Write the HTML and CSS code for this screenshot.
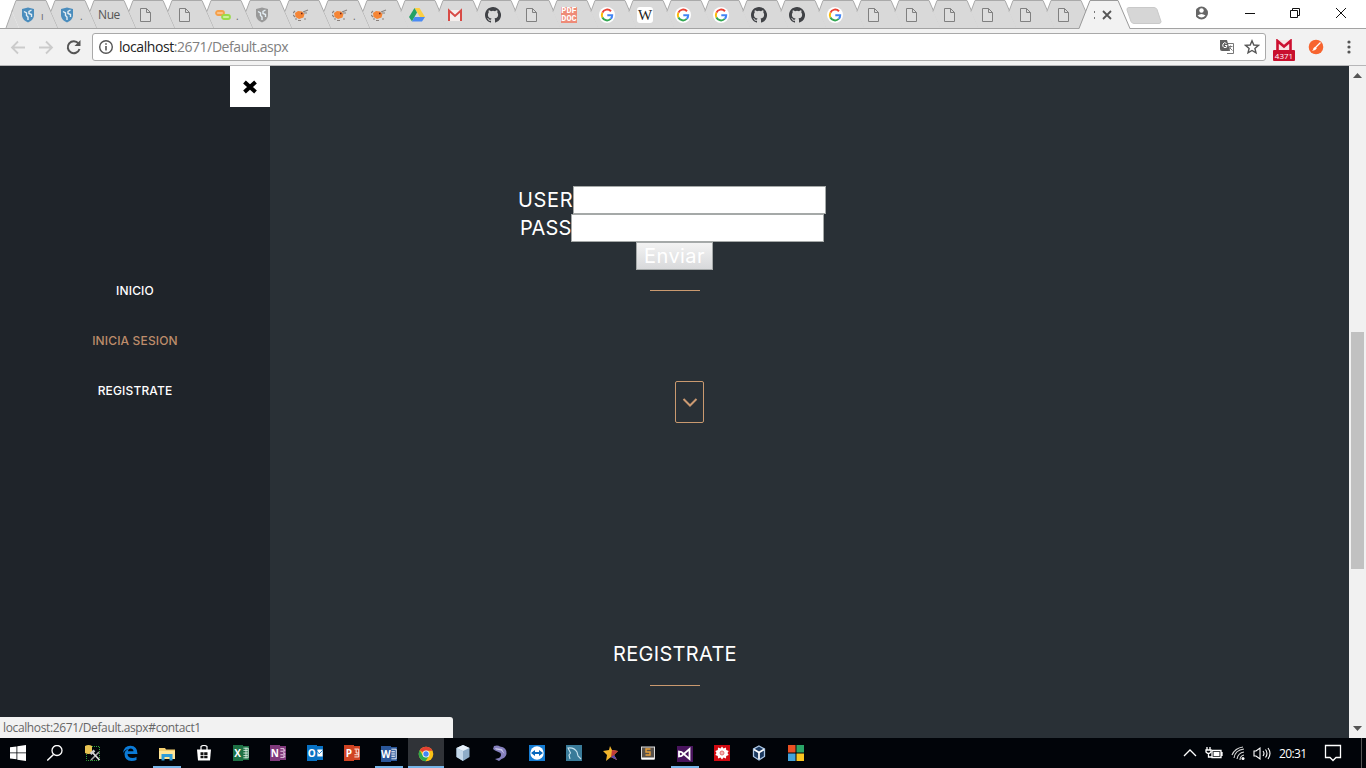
FILE: index.html
```html
<!DOCTYPE html>
<html lang="es">
<head>
<meta charset="utf-8">
<title>Default</title>
<link rel="stylesheet" href="styles.css">
</head>
<body>
<svg class="defs" width="0" height="0">
  <symbol id="tab" viewBox="0 0 54 28"><path d="M5.9 11.5 10 .5H40L52 28H13z" fill="#d9d9d9"/><path d="M5.9 11.5 10 .5H40L52 28" fill="none" stroke="#aaa"/></symbol>
  <symbol id="page" viewBox="0 0 16 16"><path d="M3.500 1.500h6l4 4v9h-10zM9.500 1.500v4h4" fill="#dedede" stroke="#808080"/></symbol>
  <symbol id="shield" viewBox="0 0 16 16"><path d="M8 .5 14 2v7Q13 13.500 8 15.500 3 13.500 2 9V2z" fill="currentColor"/><path d="M4 4.500 6.500 6v2.500L8 10v3M11.500 3 9 4.500v2l2.500 1V10" fill="none" stroke="#e4eef4" stroke-width="1.400"/></symbol>
  <symbol id="links" viewBox="0 0 16 16"><rect x="1" y="4" width="8" height="4" rx="2" fill="#f9c38c" stroke="#f5a04a" stroke-width="1.800"/><rect x="7" y="8" width="8" height="4" rx="2" fill="#cdf09c" stroke="#9adb4b" stroke-width="1.800"/></symbol>
  <symbol id="crab" viewBox="0 0 16 16"><path d="M2 6l3-2 4 .5L11.500 7l-1 3.500L6 12l-3.500-2z" fill="#f58535"/><path d="M0 6l2-2M10 5l5-2M11 6h3M0 8l2 2M2 12h2M5 13.500h3M11 12h2" stroke="#89817d" stroke-width="1.200"/><path d="M8 6.500h1.500" stroke="#622" stroke-width="1.300"/></symbol>
  <symbol id="drive" viewBox="0 0 16 16"><path d="M5.500 1h5L16 10h-5z" fill="#fccf43"/><path d="M5.500 1 8 5.500 3 14.500 0 10z" fill="#24a265"/><path d="M5.500 10H16l-3 4.500H3z" fill="#4a8af4"/></symbol>
  <symbol id="gmail" viewBox="0 0 16 16"><path d="M1 3h14v11H1z" fill="#f5efed"/><path d="M2 14V3.500l6 5.500 6-5.500V14" fill="none" stroke="#d84b46" stroke-width="2"/></symbol>
  <symbol id="github" viewBox="0 0 16 16"><path fill="#404246" d="M8 0C3.580 0 0 3.580 0 8c0 3.540 2.290 6.530 5.470 7.590.4.070.550-.17.550-.38v-1.490c-2.230.48-2.690-.94-2.690-.94-.36-.92-.89-1.170-.89-1.170-.73-.5.060-.49.060-.49.800.060 1.230.82 1.230.82.710 1.230 1.870.87 2.330.67.070-.52.280-.87.500-1.070-1.780-.2-3.640-.89-3.640-3.950 0-.88.310-1.590.82-2.150-.08-.2-.36-1.020.080-2.120 0 0 .67-.21 2.200.82a7.600 7.600 0 0 1 4 0c1.530-1.040 2.200-.82 2.200-.82.440 1.100.16 1.920.080 2.120.51.560.82 1.270.82 2.150 0 3.070-1.870 3.750-3.650 3.950.29.250.54.730.54 1.480v2.200c0 .21.150.46.550.38A8 8 0 0 0 8 0"/></symbol>
  <symbol id="google" viewBox="0 0 16 16"><circle cx="8" cy="8" r="8" fill="#fff"/><g fill="none" stroke-width="2"><path d="M12 4.200A5.200 5.200 0 0 0 3.400 5.700" stroke="#ea4335"/><path d="M3.400 5.700a5.200 5.200 0 0 0 0 4.800" stroke="#fbbc05"/><path d="M3.400 10.500a5.200 5.200 0 0 0 8.300 1.400" stroke="#34a853"/><path d="M11.700 11.900A5.200 5.200 0 0 0 13.200 8.200H8.300" stroke="#4285f4"/></g></symbol>
</svg>

<header class="tabstrip">
  <div class="tab wide first"><svg class="shape"><use href="#tab"/><path d="M0 28 5.900 11.500 13 28" fill="#d9d9d9"/><path d="M0 28 6.500 10" stroke="#aaa"/></svg><svg class="ico blue"><use href="#shield"/></svg><i class="cut">ı</i></div>
  <div class="tab wide"><svg class="shape"><use href="#tab"/></svg><svg class="ico blue"><use href="#shield"/></svg><i class="cut">.</i></div>
  <div class="tab wide"><svg class="shape"><use href="#tab"/></svg><span class="tabtext">Nue</span></div>
  <div class="tab wide"><svg class="shape"><use href="#tab"/></svg><svg class="ico"><use href="#page"/></svg></div>
  <div class="tab wide"><svg class="shape"><use href="#tab"/></svg><svg class="ico"><use href="#page"/></svg></div>
  <div class="tab wide"><svg class="shape"><use href="#tab"/></svg><svg class="ico"><use href="#links"/></svg><i class="cut">.</i></div>
  <div class="tab wide"><svg class="shape"><use href="#tab"/></svg><svg class="ico grey"><use href="#shield"/></svg></div>
  <div class="tab wide"><svg class="shape"><use href="#tab"/></svg><svg class="ico"><use href="#crab"/></svg></div>
  <div class="tab wide"><svg class="shape"><use href="#tab"/></svg><svg class="ico"><use href="#crab"/></svg><i class="cut">.</i></div>
  <div class="tab"><svg class="shape"><use href="#tab"/></svg><svg class="ico"><use href="#crab"/></svg></div>
  <div class="tab"><svg class="shape"><use href="#tab"/></svg><svg class="ico"><use href="#drive"/></svg></div>
  <div class="tab"><svg class="shape"><use href="#tab"/></svg><svg class="ico"><use href="#gmail"/></svg></div>
  <div class="tab"><svg class="shape"><use href="#tab"/></svg><svg class="ico"><use href="#github"/></svg></div>
  <div class="tab"><svg class="shape"><use href="#tab"/></svg><svg class="ico"><use href="#page"/></svg></div>
  <div class="tab"><svg class="shape"><use href="#tab"/></svg><span class="pdf">PDF<br>DOC</span></div>
  <div class="tab"><svg class="shape"><use href="#tab"/></svg><svg class="ico"><use href="#google"/></svg></div>
  <div class="tab"><svg class="shape"><use href="#tab"/></svg><span class="wiki">W</span></div>
  <div class="tab"><svg class="shape"><use href="#tab"/></svg><svg class="ico"><use href="#google"/></svg></div>
  <div class="tab"><svg class="shape"><use href="#tab"/></svg><svg class="ico"><use href="#google"/></svg></div>
  <div class="tab"><svg class="shape"><use href="#tab"/></svg><svg class="ico"><use href="#github"/></svg></div>
  <div class="tab"><svg class="shape"><use href="#tab"/></svg><svg class="ico"><use href="#github"/></svg></div>
  <div class="tab"><svg class="shape"><use href="#tab"/></svg><svg class="ico"><use href="#google"/></svg></div>
  <div class="tab"><svg class="shape"><use href="#tab"/></svg><svg class="ico"><use href="#page"/></svg></div>
  <div class="tab"><svg class="shape"><use href="#tab"/></svg><svg class="ico"><use href="#page"/></svg></div>
  <div class="tab"><svg class="shape"><use href="#tab"/></svg><svg class="ico"><use href="#page"/></svg></div>
  <div class="tab"><svg class="shape"><use href="#tab"/></svg><svg class="ico"><use href="#page"/></svg></div>
  <div class="tab"><svg class="shape"><use href="#tab"/></svg><svg class="ico"><use href="#page"/></svg></div>
  <div class="tab"><svg class="shape"><use href="#tab"/></svg><svg class="ico"><use href="#page"/></svg></div>
  <div class="tab active"><svg class="shape"><path d="M0 29 11 .5H39L51 29z" fill="#f2f2f2"/><path d="M0 28.500 11 .5H39L51 28.500" fill="none" stroke="#999"/><path d="M15.500 11v2m0 4v2" stroke="#777"/><path d="m24 11 8 8m0-8-8 8" stroke="#555" stroke-width="1.800"/></svg></div>
  <svg class="newtab" width="36" height="18"><path d="M3 .5h25q2 0 3 2l4 12q0 2-2 2H8q-2 0-3-2L1 3Q.5.500 3 .5" fill="#d6d6d6" stroke="#c9c9c9"/></svg>
  <svg class="winctl" width="170" height="28"><circle cx="5.500" cy="13" r="6.500" fill="#666"/><circle cx="5.500" cy="10.500" r="2.200" fill="#fff"/><path d="M1.500 15.500q4-3 8 0-4 4-8 0" fill="#fff"/><path d="M49 13.500h10M94.500 10.500h7v7h-7zm2 0v-2h7v7h-2M140 8l10 10m0-10-10 10" fill="none" stroke="#111"/></svg>
</header>

<div class="toolbar">
  <svg class="nav" width="92" height="37"><g fill="none" stroke="#cbcbcb" stroke-width="1.800"><path d="M25 18.500H12m6-6-6 6 6 6"/><path d="M39 18.500h13m-6-6 6 6-6 6"/></g><path d="M78.500 14.500A6 6 0 1 0 79.500 20" fill="none" stroke="#555" stroke-width="2"/><path d="M80.500 11v6h-6z" fill="#555"/></svg>
  <div class="omnibox">
    <svg width="16" height="16"><circle cx="8" cy="8" r="6.300" fill="none" stroke="#555" stroke-width="1.400"/><path d="M8 7v4.500M8 4.200v1.600" stroke="#555" stroke-width="1.600"/></svg>
    <span class="url"><b>localhost</b>:2671/Default.aspx</span>
    <svg class="translate" width="16" height="16"><path d="M7 4.500h7.500v10H8" fill="#fff" stroke="#777"/><path d="M1 1h7l3 11H3q-2 0-2-2z" fill="#606060"/><path d="M7.500 4.500Q5 2.500 4 5t1 3.500q3 1 3-2H6" fill="none" stroke="#fff"/><path d="M9.500 7.500h4m-2-1v1q-1 3-2 4m1-3 3 3" fill="none" stroke="#777"/></svg>
    <svg width="16" height="16"><path d="m8 1.800 1.800 4.200 4.600.4-3.500 3 1.100 4.500-4-2.400-4 2.400 1.100-4.500-3.500-3 4.600-.4z" fill="none" stroke="#555" stroke-width="1.400"/></svg>
  </div>
  <div class="ext"><svg width="22" height="12"><path d="M3 1h16v11H3z" fill="#f7e3e3"/><path d="M4.500 12V2l6.500 5.500L17.500 2v10" fill="none" stroke="#cc1030" stroke-width="2.600"/></svg><span>4371</span></div>
  <svg class="orange" width="16" height="16"><circle cx="8" cy="8" r="7.300" fill="#f7642f"/><path d="M12.500 3.500 8 8" stroke="#fff" stroke-width="1.300"/><path d="M7.300 7.500 9 9q-1.500 3-5 2.700 1.500-1 1.400-2.500z" fill="#fff"/></svg>
  <svg class="menu" width="6" height="16"><g fill="#555"><circle cx="3" cy="3" r="1.600"/><circle cx="3" cy="8" r="1.600"/><circle cx="3" cy="13" r="1.600"/></g></svg>
</div>

<div class="viewport">
  <nav class="sidebar">
    <div class="close"><svg width="16" height="16"><path d="m2.500 3 11 10m0-10-11 10" stroke="#000" stroke-width="4"/></svg></div>
    <a>INICIO</a>
    <a class="current">INICIA SESION</a>
    <a>REGISTRATE</a>
  </nav>
  <main class="content">
    <div class="field user"><label>USER</label><input type="text"></div>
    <div class="field pass"><label>PASS</label><input type="text"></div>
    <button class="send">Enviar</button>
    <div class="rule"></div>
    <div class="down"><svg width="16" height="12"><path d="m1.500 3 6.500 6.500L14.500 3" fill="none" stroke="#cc9a72" stroke-width="2"/></svg></div>
    <h2>REGISTRATE</h2>
    <div class="rule"></div>
  </main>
  <div class="scrollbar"><svg width="9" height="5"><path d="M0 5 4.500 0 9 5z" fill="#555"/></svg><div class="thumb"></div><svg width="9" height="5"><path d="m0 0 4.500 5L9 0z" fill="#555"/></svg></div>
  <div class="status">localhost:2671/Default.aspx#contact1</div>
</div>

<footer class="taskbar">
  <div class="apps">
    <div><svg viewBox="0 0 16 16"><path d="M0 2.300 6.500 1.400v6H0zM7.300 1.200 16 0v7.400H7.300zM0 8.300h6.500v6L0 13.600zM7.300 8.300H16V16l-8.700-1.300z" fill="#fff"/></svg></div>
    <div><svg viewBox="0 0 16 16"><circle cx="10" cy="5.500" r="5" fill="none" stroke="#fff" stroke-width="1.300"/><path d="m6.500 9.500-6.300 6" stroke="#fff" stroke-width="1.500"/></svg></div>
    <div><svg viewBox="0 0 16 16"><path d="M3 1.500h11.500v14h-13V9" fill="none" stroke="#36a43a" stroke-dasharray="1 1"/><path d="M0 1q3.500-2 7 0v7q-3.500 2-7 0z" fill="#e9c453"/><path d="m6 15 8-8" stroke="#aaa" stroke-width="1.600"/><path d="m7 7 7.500 8" stroke="#ddd" stroke-width="1.800"/><path d="m5.500 9 4-3.500" stroke="#ccc" stroke-width="2.500"/></svg></div>
    <div><svg viewBox="0 0 16 16"><path d="M1 8Q2 .8 8.400.8 15.500 1 15.500 9H5.500q.3 4 5 4 2 0 4-1v3q-2 1-5 1-7-.5-7-7 0-3.500 4-5Q3 4.500 1 8m5-1.800h5.500q-.3-2.700-2.800-2.700T6 6.200" fill="#0b7bd7"/></svg></div>
    <div class="open explorer"><svg viewBox="0 0 16 16"><path d="M0 2h6l1 1.500h9V13H0z" fill="#f5cf70"/><path d="M0 5h16v8H0z" fill="#ffe596"/><path d="M2.500 14.500V8h11v6.500h-3V11h-5v3.500z" fill="#2e9cd8"/></svg></div>
    <div><svg viewBox="0 0 16 16"><path d="M1 4.500h14l-1 11H2z" fill="#fff"/><path d="M5 5V1.500q3-2 6 0V5" fill="none" stroke="#fff" stroke-width="1.200"/><path d="M4.500 7.300h3V10h-3zm3.700 0h3.300V10H8.200zM4.500 10.700h3v2.600h-3zm3.700 0h3.300v2.600H8.200z" fill="#111"/></svg></div>
    <div class="office excel"><b>X</b><svg viewBox="0 0 6 16"><path d="M0 2.500h5.500v11H0M0 5h5M0 8h5M0 11h5M3 2v12" fill="none" stroke="#e5f4ea"/></svg></div>
    <div class="office note"><b>N</b><svg viewBox="0 0 6 16"><path d="M0 3h4v10H0M5 4v2M5 8v2M5 11v2M0 6h3M0 10h3" fill="none" stroke="#f3def2"/></svg></div>
    <div class="office outlook"><b>O</b><svg viewBox="0 0 6 16"><path d="M0 4h6v8H0z" fill="#fff"/><path d="m0 6 2 3 4-4" fill="none" stroke="#0877c9"/></svg></div>
    <div class="office power"><b>P</b><svg viewBox="0 0 6 16"><path d="M0 3.500h5v9H0M0 10h5M2 4v4h3" fill="none" stroke="#fff"/></svg></div>
    <div class="office word open"><b>W</b><svg viewBox="0 0 6 16"><path d="M0 2.500h5.500v11H0M0 5h4M0 7h4M0 9h4M0 11h4" fill="none" stroke="#fff"/></svg></div>
    <div class="open focus"><svg viewBox="0 0 16 16"><circle cx="8" cy="8" r="7.300" fill="#fbc116"/><path d="M8 8 1.700 4.300A7.300 7.300 0 0 1 14.500 4.800H8z" fill="#e34133"/><path d="M1.700 4.300A7.300 7.300 0 0 0 7.500 15.300L11 10 5 10z" fill="#2da94f"/><circle cx="8" cy="8" r="3.500" fill="#fff"/><circle cx="8" cy="8" r="2.700" fill="#4285f4"/></svg></div>
    <div><svg viewBox="0 0 16 16"><path d="m8 0 6.500 3v9L8 16l-6.500-4V3z" fill="#8eadc8"/><path d="m8 0 6.500 3L8 6 1.500 3z" fill="#e8f2fb"/><path d="M1.500 3 8 6v10l-6.500-4z" fill="#c3d8e9"/></svg></div>
    <div><svg viewBox="0 0 16 16"><path d="M2 1q4-1 6 .5 7 .5 6.500 7.500-1 4-5 5L7 16l-4-2 4-1q3-2 1.500-5L3 5.500 1 4z" fill="#8580bd"/><path d="m3 3 7 1 2.500 5L9 5.500 4 4.500z" fill="#c7c6e9"/></svg></div>
    <div><svg viewBox="0 0 16 16"><path d="M0 0h16v16H0z" fill="#157cd2"/><circle cx="8" cy="8" r="6.700" fill="#fff"/><path d="m2 8 4-3v2h4V5l4 3-4 3V9H6v2z" fill="#0868bd"/></svg></div>
    <div><svg viewBox="0 0 16 16"><path d="M0 0h16v16H0z" fill="#397b99"/><path d="M4 14 3 10 4.500 8 2 3q6-1 9 4l1 4 3 3" fill="none" stroke="#c5e2ee" stroke-width="1.100"/></svg></div>
    <div><svg viewBox="0 0 16 16"><path d="m7 1 2 4 6 1-4 4 3 5-6-3-5 4 1-6-4-4 6-1z" fill="#f2b52c"/><path d="m9 5 6 1-4 4 3 5-6-3z" fill="#c33d3b"/><path d="m8 12 6 3-3-5z" fill="#5a4bad"/></svg></div>
    <div><svg viewBox="0 0 16 16"><rect x="1.500" y="2" width="13" height="12" fill="#57514b" stroke="#ddd"/><path d="M2 13.500h12" stroke="#fff" stroke-width="2"/><path d="M10.500 4H6v3h4v3H5.500" fill="none" stroke="#e9a13b" stroke-width="1.400"/></svg></div>
    <div class="open"><svg viewBox="0 0 16 16"><path d="M0 0h16v16H0z" fill="#48145d"/><path d="M2 5.500v5L4.500 10 12.500 3v10L4.500 6z" fill="none" stroke="#fff" stroke-width="1.800"/></svg></div>
    <div><svg viewBox="0 0 16 16"><path d="M0 0h16v16H0z" fill="#d20a12"/><path d="m8 1.500 1.500 2 2.500-1 .2 2.600 2.500.9-1.200 2 1.200 2-2.500.9-.2 2.600-2.500-1L8 14.500l-1.500-2-2.500 1-.2-2.600-2.500-.9 1.200-2-1.200-2 2.500-.9L4 2.500l2.500 1z" fill="#fff"/><circle cx="8" cy="8" r="2" fill="#f2b7b7" stroke="#e26a6a"/></svg></div>
    <div><svg viewBox="0 0 16 16"><path d="m8 1 5.500 3v7.500L8 15l-5.500-3.500V4z" fill="#1b395f" stroke="#aac6e5" stroke-width="1.300"/><path d="m3 4.500 5 3 5-3M8 7.500V14" fill="none" stroke="#fff" stroke-width="1.700"/></svg></div>
    <div><svg viewBox="0 0 16 16"><path d="M0 0h7.500v7.500H0z" fill="#e95023"/><path d="M8.500 0H16v7.500H8.500z" fill="#2aa567"/><path d="M0 8.500h7.500V16H0z" fill="#42a2da"/><path d="M8.500 8.500H16V16H8.500z" fill="#fac51f"/></svg></div>
  </div>
  <div class="tray">
    <svg width="94" height="30"><g fill="none" stroke="#fff" stroke-width="1.300"><path d="m1 18 6-6 6 6"/><path d="M29 12.500h9v7H29zM39 14v4"/><path d="M24 9v3m3-3v3m-4 0h5v2q-2.500 3-5 0zm2.500 3v4H29"/><path d="M51 20q1-8 10-9M54 21q1-6 7-7M57 22q0-4 4-5M49 17q3-7 11-8" stroke="#d9d9d9" stroke-width="1.100"/><path d="M71 13h2l4-3v11l-4-3h-2zM80 13q2 2.500 0 5M82.500 11.500q3 4 0 8M85 10q4 5.500 0 11" stroke-width="1.100"/></g><path d="M30.500 14h6v4h-6z" fill="#fff"/><circle cx="60" cy="20.500" r="1.500" fill="#fff"/></svg>
    <span class="clock">20:31</span>
    <svg width="18" height="30"><path d="M1.500 7.500h15v12H12l-3 3-3-3H1.500z" fill="none" stroke="#fff" stroke-width="1.300"/></svg>
    <i class="peek"></i>
  </div>
</footer>
</body>
</html>
```

FILE: styles.css
```css
* { box-sizing: border-box; }
body { margin: 0; width: 1366px; height: 768px; overflow: hidden; display: flex; flex-direction: column; background: #fff; font-family: "Open Sans", "Noto Sans", sans-serif; }
svg { display: block; flex: none; }
.defs { position: absolute; }

.tabstrip { height: 29px; display: flex; padding-left: 6px; border-bottom: 1px solid #a3a3a3; flex: none; }
.tab { width: 38px; height: 28px; flex: none; display: grid; grid-template-columns: 38px; }
.tab.wide { width: 39px; }
.tab > * { grid-area: 1 / 1; }
.shape { width: 54px; height: 28px; overflow: visible; }
.ico { width: 16px; height: 16px; margin: 7px 0 0 14px; }
.blue { color: #4b8dbd; }
.grey { color: #999; }
.cut { font: normal 10px "Open Sans", sans-serif; color: #666; margin: 9px 0 0 35px; }
.tabtext { font-size: 12px; line-height: 16px; margin: 7px 0 0 14px; color: #555; letter-spacing: -.4px; }
.pdf { width: 16px; height: 16px; margin: 7px 0 0 14px; background: #ee8b78; color: #fff; font: bold 8.500px/8px "Liberation Mono", monospace; text-align: center; }
.wiki { width: 16px; height: 16px; margin: 7px 0 0 14px; background: #fff; border-radius: 3px; color: #222; font: 15px/16px "Liberation Serif", serif; text-align: center; }
.active { width: 49px; z-index: 1; }
.active .shape { height: 29px; }
.newtab { margin: 7px 0 0 -2px; }
.winctl { margin-left: 34px; }

.toolbar { height: 37px; flex: none; display: flex; background: #f2f2f2; border-bottom: 1px solid #b6b6b8; align-items: flex-start; }
.omnibox { width: 1174px; height: 28px; margin-top: 4px; border: 1px solid #a9a9a9; border-radius: 3px; background: #fff; display: flex; align-items: center; padding: 0 5px; }
.url { font-size: 14px; line-height: 20px; margin-left: 5px; color: #808080; letter-spacing: -.44px; }
.url b { font-weight: 400; color: #222; }
.translate { margin-left: auto; margin-right: 9px; }
.ext { width: 22px; margin: 10px 0 0 7px; display: flex; flex-direction: column; }
.ext svg { height: 11px; }
.ext span { background: #c8102e; color: #fff; font-size: 8px; font-weight: 400; line-height: 11px; text-align: center; border-radius: 1px; }
.orange { margin: 10px 0 0 13px; }
.menu { margin: 10px 0 0 22px; }

.viewport { height: 672px; flex: none; display: flex; position: relative; }
.sidebar { width: 270px; background: #1f242a; display: flex; flex-direction: column; align-items: center; color: #fff; }
.close { width: 40px; height: 41px; background: #fff; align-self: flex-end; display: grid; place-items: center; margin-bottom: 159px; }
.sidebar a { height: 50px; font: 500 12px/50px Inter, sans-serif; letter-spacing: .15px; }
.sidebar .current { color: #bd8c6b; }
.content { flex: 1; background: #293036; padding: 120px 269px 0 0; display: flex; flex-direction: column; align-items: center; font-family: Inter, sans-serif; color: #fff; font-size: 20px; }
.field { display: flex; height: 28px; line-height: 28px; margin-right: 6px; }
.field label { white-space: nowrap; }
.user label { width: 55px; letter-spacing: .7px; }
.pass label { width: 51px; letter-spacing: .2px; }
.field input { width: 253px; height: 28px; border: 1px solid #a5a9a8; background: #fff; padding: 0; }
.send { width: 77px; height: 28px; margin-right: 1px; border: 1px solid #a5a9a9; background: linear-gradient(#f3f3f3, #d8d9db); color: #fff; font: 20px/24px Inter, sans-serif; letter-spacing: .4px; padding: 0; }
.rule { width: 50px; height: 1px; background: #c9996f; margin-top: 20px; flex: none; }
.down { width: 29px; height: 42px; border: 1px solid #c9996f; border-radius: 2px; margin: 90px 0 0 29px; display: grid; place-items: center; }
.content h2 { margin: 217px 0 0; font: 400 20px/28px Inter, sans-serif; letter-spacing: .3px; }
.content h2 + .rule { margin-top: 17px; }
.scrollbar { width: 17px; background: #f1f1f1; display: flex; flex-direction: column; align-items: center; justify-content: space-between; padding: 7px 0; }
.thumb { width: 13px; height: 237px; background: #c1c1c1; margin-top: 96px; }
.status { position: absolute; left: 0; bottom: 0; width: 453px; height: 21px; background: #f2f2f2; border-radius: 0 3px 0 0; padding-left: 3px; font-size: 12px; line-height: 21px; color: #666; letter-spacing: -.37px; }

.taskbar { height: 30px; flex: none; background: #010409; display: flex; justify-content: space-between; }
.apps { display: flex; gap: 1px; padding-left: .4px; }
.apps > div { width: 36.050px; height: 30px; display: flex; align-items: center; justify-content: center; border-bottom: 2px solid transparent; border-top: 2px solid transparent; }
.apps svg { width: 16px; height: 16px; }
.apps .open { border-bottom: 0; }
.apps .open::after { content: ""; align-self: flex-end; flex: none; width: 28px; height: 2px; background: #76b5e8; margin-left: -22px; margin-right: -6px; }
.apps .focus { background: #303338; }
.apps .focus::after { width: 36px; margin-left: -26px; margin-right: -10px; }
.office b { width: 10px; height: 16px; font-size: 10px; line-height: 16px; color: #fff; text-align: center; background: var(--c); }
.apps .office svg { width: 6px; height: 14px; background: var(--c); }
.excel { --c: #1e7145; }
.note { --c: #80397b; }
.outlook { --c: #0872c4; }
.power { --c: #d04423; }
.word { --c: #2a5699; }
.tray { display: flex; align-items: center; }
.clock { width: 30px; margin: 0 15px 0 2px; color: #fff; font-size: 12px; letter-spacing: -.6px; white-space: nowrap; }
.peek { width: 5px; height: 30px; border-left: 1px solid #555; margin-left: 19px; }
```
